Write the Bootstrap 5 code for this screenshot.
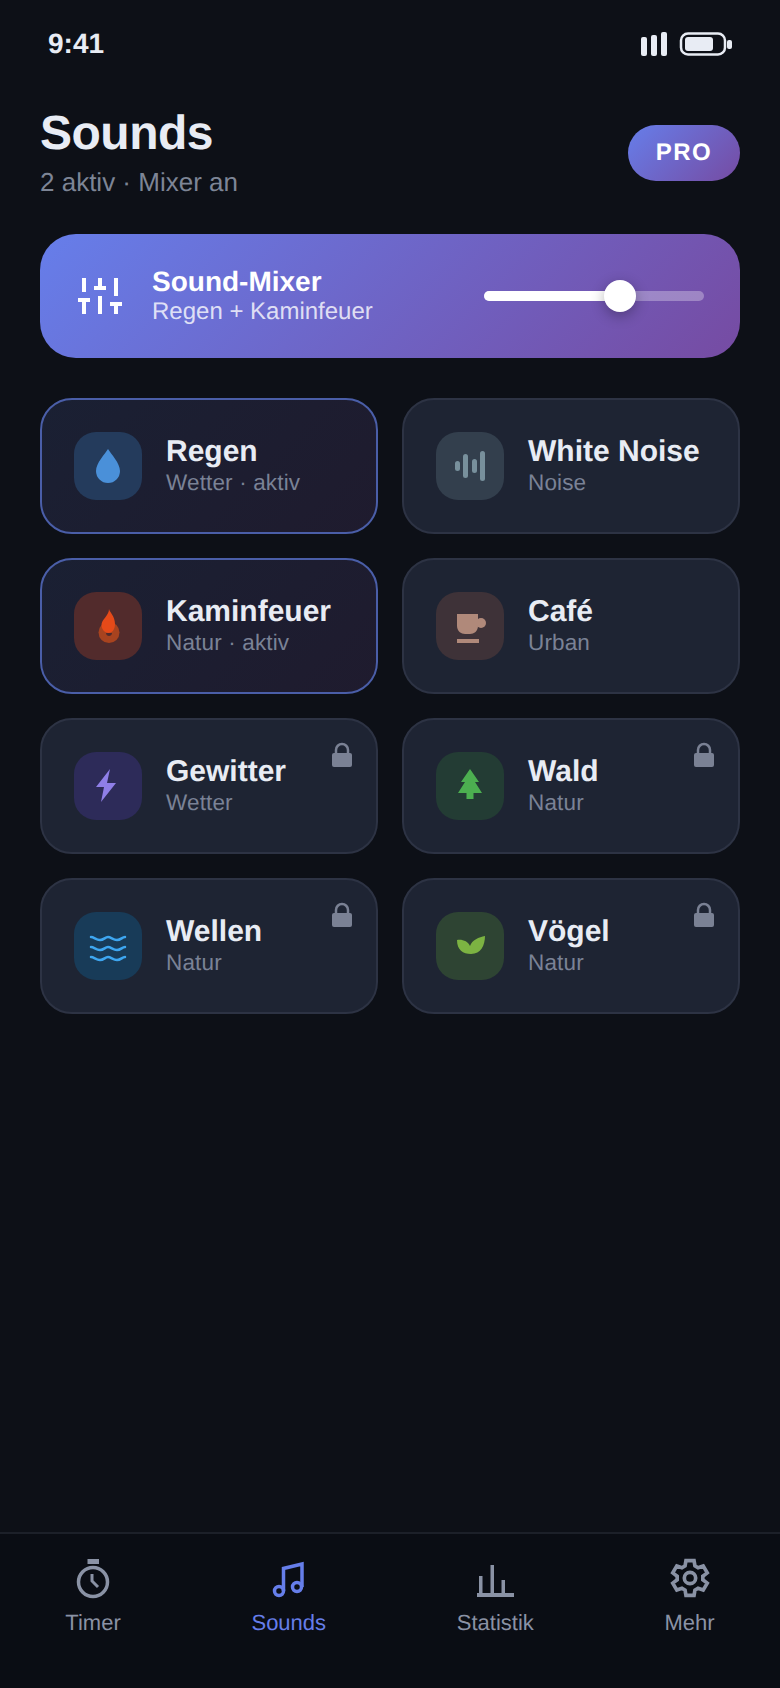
<!DOCTYPE html>
<html lang="de">
<head>
<meta charset="UTF-8">
<meta name="viewport" content="width=device-width, initial-scale=1.0">
<title>Sounds</title>
<link rel="stylesheet" href="https://cdn.jsdelivr.net/npm/bootstrap@5.3.3/dist/css/bootstrap.min.css">
<style>
    body { background: #0d1017; font-family: "Liberation Sans", Arial, sans-serif; color: #e8ecf4; text-rendering: geometricPrecision; }
    .phone { position: relative; width: 780px; height: 1688px; }
    .status-row { height: 88px; padding: 0 47px 0 48px; }
    .status-time { font-size: 28px; font-weight: 700; line-height: 1; }
    .status-icons { margin-top: 2px; }
    .page-head { padding: 18px 40px 0; }
    .page-title { font-size: 48px; font-weight: 700; letter-spacing: -.5px; line-height: 56px; margin: 0; }
    .page-sub { font-size: 26px; line-height: 34px; color: #7d8596; margin-top: 3px; }
    .pro-pill { width: 112px; height: 56px; border-radius: 28px; background: linear-gradient(135deg, #667eea, #764ba2); color: #fff; font-size: 24px; font-weight: 700; letter-spacing: 1.5px; margin-top: 19px; }
    .mixer-box { margin: 35px 40px 0; height: 124px; border-radius: 36px; background: linear-gradient(135deg, #667eea, #764ba2); padding: 0 36px 0 38px; color: #fff; }
    .mixer-icon { margin-right: 30px; flex: none; }
    .mixer-title { font-size: 28px; font-weight: 700; line-height: 32px; }
    .mixer-sub { font-size: 24px; line-height: 28px; color: rgba(255,255,255,.8); }
    .mixer-track { width: 220px; height: 10px; border-radius: 5px; background: rgba(255,255,255,.3); position: relative; }
    .mixer-fill { height: 100%; border-radius: 5px; background: #fff; }
    .mixer-thumb { position: absolute; top: -11px; left: 120px; width: 32px; height: 32px; border-radius: 50%; background: #fff; box-shadow: 0 4px 14px rgba(0,0,0,.3); }
    .sound-grid { display: grid; grid-template-columns: 338px 338px; gap: 24px; padding: 40px 40px 0; }
    .sound-card { position: relative; height: 136px; border-radius: 32px; border: 2px solid #2d3344; background: #1e2433; padding: 0 32px; gap: 24px; }
    .sound-card.is-on { border-color: #4a5ea8; background: linear-gradient(135deg, #1a2033, #1f1b2e); }
    .tile { width: 68px; height: 68px; border-radius: 22px; flex: none; }
    .tile svg { display: block; }
    .sound-name { font-size: 30px; font-weight: 700; line-height: 34px; color: #e8ecf4; white-space: nowrap; }
    .sound-meta { font-size: 22.5px; letter-spacing: .15px; line-height: 28px; color: #7a8296; white-space: nowrap; }
    .lock-mark { position: absolute; top: 22px; right: 24px; display: block; }
    .bottom-bar { position: absolute; left: 0; right: 0; bottom: 0; height: 156px; background: #0a0d14; border-top: 2px solid #1c2029; padding-top: 22px; }
    .tab-item { font-size: 22px; line-height: 28px; color: #8a92a5; }
    .tab-item svg { display: block; margin-bottom: 9px; }
    .tab-item.is-current { color: #667eea; }
</style>
</head>
<body>
<div class="phone">
    <div class="status-row d-flex justify-content-between align-items-center">
        <span class="status-time">9:41</span>
        <svg class="status-icons" width="92" height="26" viewBox="0 0 92 26" fill="#e8ecf4">
            <rect x="0" y="5" width="6" height="19" rx="2"/>
            <rect x="10" y="3" width="6" height="21" rx="2"/>
            <rect x="20" y="0" width="6" height="24" rx="2"/>
            <rect x="40" y="1.5" width="44" height="21" rx="7" fill="none" stroke="#e8ecf4" stroke-width="2.5"/>
            <rect x="44" y="5" width="28" height="14" rx="3"/>
            <rect x="86" y="8" width="5" height="9" rx="2"/>
        </svg>
    </div>
    <div class="page-head d-flex justify-content-between align-items-start">
        <div>
            <h1 class="page-title">Sounds</h1>
            <div class="page-sub">2 aktiv · Mixer an</div>
        </div>
        <div class="pro-pill d-flex align-items-center justify-content-center">PRO</div>
    </div>
    <div class="mixer-box d-flex align-items-center">
        <svg class="mixer-icon" width="44" height="36" viewBox="0 0 44 36" fill="#fff">
            <rect x="4" y="0" width="4" height="14"/><rect x="0" y="20" width="12" height="4"/><rect x="4" y="20" width="4" height="16"/>
            <rect x="20" y="0" width="4" height="10"/><rect x="16" y="8" width="12" height="4"/><rect x="20" y="18" width="4" height="18"/>
            <rect x="36" y="0" width="4" height="18"/><rect x="32" y="24" width="12" height="4"/><rect x="36" y="24" width="4" height="12"/>
        </svg>
        <div class="flex-grow-1">
            <div class="mixer-title">Sound-Mixer</div>
            <div class="mixer-sub">Regen + Kaminfeuer</div>
        </div>
        <div class="mixer-track">
            <div class="mixer-fill" style="width: 62%"></div>
            <div class="mixer-thumb"></div>
        </div>
    </div>
    <div class="sound-grid">
        <div class="sound-card is-on d-flex align-items-center">
            <div class="tile" style="background:#243b5c">
                <svg width="68" height="68" viewBox="0 0 68 68"><path fill="#4a90d9" d="M34 17C31 22 22 31 22 39A12 12 0 0 0 46 39C46 31 37 22 34 17Z"/></svg>
            </div>
            <div><div class="sound-name">Regen</div><div class="sound-meta">Wetter · aktiv</div></div>
        </div>
        <div class="sound-card d-flex align-items-center">
            <div class="tile" style="background:#333f4d">
                <svg width="68" height="68" viewBox="0 0 68 68" fill="#78909c"><rect x="19" y="29" width="5" height="10" rx="2.5"/><rect x="27" y="22" width="5" height="24" rx="2.5"/><rect x="36" y="27" width="5" height="14" rx="2.5"/><rect x="44" y="19" width="5" height="30" rx="2.5"/></svg>
            </div>
            <div><div class="sound-name">White Noise</div><div class="sound-meta">Noise</div></div>
        </div>
        <div class="sound-card is-on d-flex align-items-center">
            <div class="tile" style="background:#522b2c">
                <svg width="68" height="68" viewBox="0 0 68 68"><circle cx="35" cy="40.500" r="10.500" fill="#a8431f"/><path fill="#e64a19" d="M35 17C35.500 20 41 24 41 32C41 37 38.500 41 34.500 41C30.500 41 27.500 37 27.500 33C27.500 27 35 24 35 17Z"/><path fill="#522b2c" d="M32 41H38C38 43 36.500 44 35 44C33.500 44 32 43 32 41Z"/></svg>
            </div>
            <div><div class="sound-name">Kaminfeuer</div><div class="sound-meta">Natur · aktiv</div></div>
        </div>
        <div class="sound-card d-flex align-items-center">
            <div class="tile" style="background:#3e3238">
                <svg width="68" height="68" viewBox="0 0 68 68" fill="#b0897a"><path d="M21 22H42V34C42 39 38 42 34 42H29C25 42 21 39 21 34Z"/><circle cx="45" cy="31" r="5"/><rect x="21" y="47" width="22" height="4"/></svg>
            </div>
            <div><div class="sound-name">Café</div><div class="sound-meta">Urban</div></div>
        </div>
        <div class="sound-card d-flex align-items-center">
            <div class="tile" style="background:#2d2b59">
                <svg width="68" height="68" viewBox="0 0 68 68"><path fill="#8f7fe8" d="M36 17L22 35H30L27 50L42 31H33Z"/></svg>
            </div>
            <div><div class="sound-name">Gewitter</div><div class="sound-meta">Wetter</div></div>
            <svg class="lock-mark" width="20" height="25" viewBox="0 0 20 25"><path d="M4 12V8A6 6 0 0 1 16 8V12" fill="none" stroke="#7a8194" stroke-width="2.500"/><rect x="0" y="11" width="20" height="14" rx="2" fill="#7a8194"/></svg>
        </div>
        <div class="sound-card d-flex align-items-center">
            <div class="tile" style="background:#233c34">
                <svg width="68" height="68" viewBox="0 0 68 68"><path fill="#4caf50" d="M34 17L43 30H39L46 41H37.500V47H30.500V41H22L29 30H25Z"/></svg>
            </div>
            <div><div class="sound-name">Wald</div><div class="sound-meta">Natur</div></div>
            <svg class="lock-mark" width="20" height="25" viewBox="0 0 20 25"><path d="M4 12V8A6 6 0 0 1 16 8V12" fill="none" stroke="#7a8194" stroke-width="2.500"/><rect x="0" y="11" width="20" height="14" rx="2" fill="#7a8194"/></svg>
        </div>
        <div class="sound-card d-flex align-items-center">
            <div class="tile" style="background:#183b58">
                <svg width="68" height="68" viewBox="0 0 68 68" fill="none" stroke="#3ea6f0" stroke-width="2.500" stroke-linecap="round"><path d="M17 25c3 0 5 3 9 3s5-3 8-3 5 3 9 3 5-3 8-3"/><path d="M17 35c3 0 5 3 9 3s5-3 8-3 5 3 9 3 5-3 8-3"/><path d="M17 45c3 0 5 3 9 3s5-3 8-3 5 3 9 3 5-3 8-3"/></svg>
            </div>
            <div><div class="sound-name">Wellen</div><div class="sound-meta">Natur</div></div>
            <svg class="lock-mark" width="20" height="25" viewBox="0 0 20 25"><path d="M4 12V8A6 6 0 0 1 16 8V12" fill="none" stroke="#7a8194" stroke-width="2.500"/><rect x="0" y="11" width="20" height="14" rx="2" fill="#7a8194"/></svg>
        </div>
        <div class="sound-card d-flex align-items-center">
            <div class="tile" style="background:#2e4433">
                <svg width="68" height="68" viewBox="0 0 68 68"><path fill="#7cb342" d="M21 28C26 27 32 29 34 34C36 28 43 25 49 24C49 33 45 42 35 42C27 42 21 38 21 28Z"/></svg>
            </div>
            <div><div class="sound-name">Vögel</div><div class="sound-meta">Natur</div></div>
            <svg class="lock-mark" width="20" height="25" viewBox="0 0 20 25"><path d="M4 12V8A6 6 0 0 1 16 8V12" fill="none" stroke="#7a8194" stroke-width="2.500"/><rect x="0" y="11" width="20" height="14" rx="2" fill="#7a8194"/></svg>
        </div>
    </div>
    <div class="bottom-bar d-flex justify-content-around align-items-start">
        <div class="tab-item d-flex flex-column align-items-center">
            <svg width="44" height="44" viewBox="0 0 44 44" fill="none" stroke="#8a92a5" stroke-width="3.500"><circle cx="22" cy="26" r="14.500"/><path d="M16.500 5.500H28" stroke-width="5"/><path d="M21 18V25L27 31" stroke-width="3"/></svg>
            Timer
        </div>
        <div class="tab-item is-current d-flex flex-column align-items-center">
            <svg width="44" height="44" viewBox="0 0 44 44" fill="none" stroke="#667eea" stroke-width="3.500"><circle cx="12" cy="35" r="4.500"/><circle cx="30" cy="31" r="4.500"/><path d="M16.500 35V12.500L35 8V31"/></svg>
            Sounds
        </div>
        <div class="tab-item d-flex flex-column align-items-center">
            <svg width="44" height="44" viewBox="0 0 44 44" fill="#8a92a5"><rect x="4" y="37" width="37" height="4"/><rect x="6" y="20" width="3.500" height="18"/><rect x="17.500" y="9" width="3.500" height="29"/><rect x="28.500" y="24" width="3.500" height="14"/></svg>
            Statistik
        </div>
        <div class="tab-item d-flex flex-column align-items-center">
            <svg width="44" height="44" viewBox="0 0 24 24" fill="none" stroke="#8a92a5" stroke-width="2"><circle cx="12" cy="12" r="3.100"/><path d="M9.800 2.500H14.200L14.700 5.400L16.400 6.400L19.200 5.400L21.400 9.200L19 11V13L21.400 14.800L19.200 18.600L16.400 17.600L14.700 18.600L14.200 21.500H9.800L9.300 18.600L7.600 17.600L4.800 18.600L2.600 14.800L5 13V11L2.600 9.200L4.800 5.400L7.600 6.400L9.300 5.400Z"/></svg>
            Mehr
        </div>
    </div>
</div>
<script src="https://cdn.jsdelivr.net/npm/bootstrap@5.3.3/dist/js/bootstrap.bundle.min.js"></script>
</body>
</html>
